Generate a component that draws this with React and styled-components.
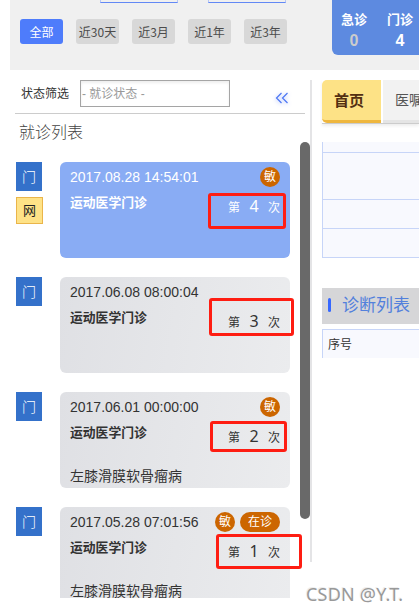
import React from "react";
import styled, { createGlobalStyle, css } from "styled-components";

const Global = createGlobalStyle`
  * { box-sizing: border-box; }
  body { margin: 0; background: #fff; overflow: hidden; color: #333;
    font-family: "Liberation Sans", "Noto Sans CJK SC", sans-serif; font-size: 12px; }
`;

const Page = styled.div`
  position: relative; width: 419px; height: 612px; overflow: hidden; white-space: nowrap;
`;
const Header = styled.header`
  height: 70px; margin-left: 10px; background: #f0f0f0; display: flex; justify-content: space-between;
`;
const Filters = styled.div`display: flex; flex-direction: column; gap: 16px;`;
const Inputs = styled.div`display: flex; gap: 30px; padding-left: 90px; height: 3px;`;
const InputEdge = styled.div`
  width: 78px; height: 3px; border: 1px solid #6288f5; border-top: 0; border-left-color: #b6c6f7; border-right-color: #b6c6f7;
`;
const Pills = styled.div`display: flex; gap: 13px; padding-left: 10px;`;
const Pill = styled.button`
  width: 43px; height: 25px; padding: 1px 0 0; border: 0; border-radius: 3px; font: 12px/22px "Noto Sans CJK SC", sans-serif;
  background: ${(p) => (p.$active ? "#4e7cfb" : "#d8d8d8")};
  color: ${(p) => (p.$active ? "#fff" : "#4c4c4c")};
`;
const Stats = styled.div`
  width: 87px; height: 55px; border-radius: 0 0 0 6px; background: #5d8ae0;
  display: flex; gap: 20px; padding: 10px 0 0 9px;
`;
const Stat = styled.div`
  width: 26px; color: #fff; font-weight: bold; font-size: 13px; line-height: 20px; text-align: center;
  b { display: block; font-size: 16px; line-height: 22px; color: ${(p) => (p.$muted ? "#ccc" : "#fff")}; }
`;
const Main = styled.main`display: flex; align-items: flex-start; padding-top: 10px;`;
const Sidebar = styled.aside`width: 312px; height: 518px; display: flex; overflow: hidden;`;
const SideContent = styled.div`width: 300px; height: 518px; flex: none;`;
const SelectRow = styled.div`
  display: flex; align-items: flex-start; width: 290px; height: 34px; margin-left: 15px; padding-left: 6px; border-bottom: 1px solid #ccc;
`;
const Label = styled.label`width: 59px; line-height: 29px;`;
const Select = styled.div`
  width: 150px; height: 27px; padding-left: 1px; border: 1px solid #a5a5a5; color: #999; line-height: 27px;
  box-shadow: inset 0 2px 3px #eee;
`;
const Collapse = styled.svg`
  width: 14px; height: 12px; margin: 12px 0 0 45px; fill: none; stroke: #4d77f4; stroke-width: 1.2; filter: drop-shadow(0 1px 2px #a9bcfa);
`;
const ListTitle = styled.h2`
  margin: 0; padding-left: 19px; height: 48px; font-size: 16px; font-weight: 300; line-height: 37px; color: #444;
`;
const Visits = styled.div`display: flex; flex-direction: column; gap: 19px; height: 436px; overflow: hidden;`;
const Visit = styled.div`display: flex; gap: 17px; padding-left: 16px; height: 96px; flex: none;`;
const Marks = styled.div`display: flex; flex-direction: column; gap: 6px; width: 27px;`;
const Mark = styled.span`
  width: 26px; height: 29px; background: #3471ca; color: #fff; font-size: 14px; line-height: 31px; text-align: center; font-weight: 300;
  ${(p) => p.$net && css`width: 27px; height: 27px; background: #fee287; border: 1px solid #eab54a; color: #222; line-height: 26px; font-size: 13px; font-weight: 400;`}
`;
const Card = styled.article`
  width: 230px; height: 96px; padding: 4px 10px; border-radius: 6px; overflow: hidden;
  background: ${(p) => (p.$active ? "#89acf4" : "linear-gradient(100deg, #dfe0e4, #ebecee)")};
  color: ${(p) => (p.$active ? "#fff" : "#333")};
`;
const CardTop = styled.div`display: flex; justify-content: space-between; height: 21px;`;
const Time = styled.time`font-size: 14px; line-height: 22px;`;
const Tags = styled.div`display: flex; gap: 5px; padding-top: 1px;`;
const Tag = styled.span`
  width: ${(p) => (p.$wide ? 40 : 20)}px; height: 20px; border-radius: 10px; background: #cc6600; color: #fff;
  font-size: 12px; line-height: 21px; text-align: center;
`;
const CardMid = styled.div`display: flex; justify-content: space-between; height: 40px;`;
const Dept = styled.b`font-size: 12.8px; line-height: 31px;`;
const Count = styled.span`
  display: flex; gap: 10px; line-height: 42px;
  i { font-style: normal; font-size: 16px; width: 8px; line-height: 38px; display: flex; justify-content: center; font-family: "Noto Sans", sans-serif; }
`;
const Diagnosis = styled.div`font-size: 14px; line-height: 38px;`;
const Scrollbar = styled.div`width: 10px; height: 377px; margin-top: 62px; border-radius: 5px; background: #696969; flex: none;`;
const Divider = styled.div`width: 2px; height: 482px; background: #e4e4e6; flex: none;`;
const Content = styled.section`width: 97px; margin-left: 10px;`;
const Tabs = styled.nav`display: flex; gap: 2px; height: 44px; border-bottom: 1px solid #ccc; box-shadow: 0 2px 3px #eee;`;
const Tab = styled.div`
  flex: none; width: 59px; height: 43px; padding-left: 12px; line-height: 41px; font-size: 14px; color: #555;
  background: #f2f2f2; border-bottom: 3px solid #e5e5e5;
  ${(p) => p.$active && css`background: #fde286; border-color: #efb73e; color: #532f12; font-weight: bold; font-size: 15px; border-radius: 5px 0 0 5px;`}
`;
const Table = styled.div`margin-top: 18px; border-left: 1px solid #c7d5f8; background: #f8f9fe;`;
const Line = styled.div`height: ${(p) => p.$h}px; border-bottom: 1px solid #c7d5f8;`;
const Section = styled.h3`
  display: flex; align-items: center; gap: 11px; height: 36px; margin: 30px 0 5px; padding-left: 6px;
  background: #d6d6d8; color: #5280dc; font-size: 17px; font-weight: 400; line-height: 34px;
  &::before { content: ""; width: 3px; height: 14px; margin-bottom: 2px; border-radius: 2px; background: #3668ff; }
`;
const Row = styled.div`
  height: 29px; padding-left: 5px; line-height: 30px; background: #f8f9fe; border: solid #c7d5f8; border-width: 1px 0 0 1px;
`;
const Callout = styled.div`
  position: absolute; left: ${(p) => p.$x}px; top: ${(p) => p.$y}px; width: ${(p) => p.$w}px; height: ${(p) => p.$h}px;
  border: 3px solid #fe1d12; border-radius: 3px;
`;
const Watermark = styled.div`
  position: absolute; left: 306px; top: 582px; font: 400 18px/24px "Noto Sans", sans-serif; letter-spacing: 0.2px; color: #999; text-shadow: -1px -1px 0 #eee;
`;

const visits = [
  { time: "2017.08.28 14:54:01", n: 4, tags: ["敏"], active: true, net: true },
  { time: "2017.06.08 08:00:04", n: 3, tags: [] },
  { time: "2017.06.01 00:00:00", n: 2, tags: ["敏"], diagnosis: "左膝滑膜软骨瘤病" },
  { time: "2017.05.28 07:01:56", n: 1, tags: ["敏", "在诊"], diagnosis: "左膝滑膜软骨瘤病" },
];
const callouts = [[208, 193, 78, 36], [209, 298, 85, 38], [210, 421, 77, 31], [216, 534, 86, 35]];

export default function App() {
  return (
    <Page>
      <Global />
      <Header>
        <Filters>
          <Inputs><InputEdge /><InputEdge /></Inputs>
          <Pills>
            {["全部", "近30天", "近3月", "近1年", "近3年"].map((t, i) => <Pill key={t} $active={i === 0}>{t}</Pill>)}
          </Pills>
        </Filters>
        <Stats>
          <Stat $muted>急诊<b>0</b></Stat>
          <Stat>门诊<b>4</b></Stat>
        </Stats>
      </Header>
      <Main>
        <Sidebar>
          <SideContent>
            <SelectRow>
              <Label>状态筛选</Label>
              <Select>- 就诊状态 -</Select>
              <Collapse viewBox="0 0 14 12"><path d="M6.5 1 1.5 6l5 5M12.5 1l-5 5 5 5" /></Collapse>
            </SelectRow>
            <ListTitle>就诊列表</ListTitle>
            <Visits>
              {visits.map((v) => (
                <Visit key={v.n}>
                  <Marks><Mark>门</Mark>{v.net && <Mark $net>网</Mark>}</Marks>
                  <Card $active={v.active}>
                    <CardTop>
                      <Time>{v.time}</Time>
                      <Tags>{v.tags.map((t) => <Tag key={t} $wide={t.length > 1}>{t}</Tag>)}</Tags>
                    </CardTop>
                    <CardMid>
                      <Dept>运动医学门诊</Dept>
                      <Count>第<i>{v.n}</i>次</Count>
                    </CardMid>
                    {v.diagnosis && <Diagnosis>{v.diagnosis}</Diagnosis>}
                  </Card>
                </Visit>
              ))}
            </Visits>
          </SideContent>
          <Scrollbar />
          <Divider />
        </Sidebar>
        <Content>
          <Tabs><Tab $active>首页</Tab><Tab>医嘱</Tab></Tabs>
          <Table><Line $h={11} /><Line $h={47} /><Line $h={29} /><Line $h={29} /></Table>
          <Section>诊断列表</Section>
          <Row>序号</Row>
        </Content>
      </Main>
      {callouts.map(([x, y, w, h]) => <Callout key={y} $x={x} $y={y} $w={w} $h={h} />)}
      <Watermark>CSDN @Y.T.</Watermark>
    </Page>
  );
}
